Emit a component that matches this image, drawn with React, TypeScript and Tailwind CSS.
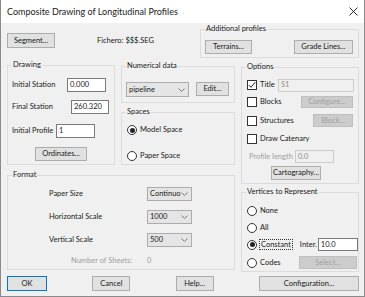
import type { ReactNode } from 'react';

const font = { fontFamily: 'Lato, "Liberation Sans", sans-serif' };

function Btn({ children, className = '', disabled = false, primary = false }: { children: ReactNode; className?: string; disabled?: boolean; primary?: boolean }) {
  return (
    <div
      className={`flex items-center justify-center shrink-0 border leading-none ${
        primary ? 'border-[#0078d7] bg-[#e1e1e1] text-[#1a1a1a]' : disabled ? 'border-[#bfbfbf] bg-[#cccccc] text-[#a0a0a0]' : 'border-[#adadad] bg-[#e1e1e1] text-[#1a1a1a]'
      } ${className}`}
    >
      {children}
    </div>
  );
}

function Group({ label, className = '', children }: { label: string; className?: string; children?: ReactNode }) {
  return (
    <div className={`relative border border-[#dcdcdc] ${className}`}>
      <span className="absolute left-[4px] top-[-6px] bg-[#f0f0f0] px-[1px] leading-[10px]">{label}</span>
      {children}
    </div>
  );
}

function TextBox({ value, className = '', dim = false }: { value: string; className?: string; dim?: boolean }) {
  return (
    <div
      className={`flex items-center shrink-0 border pl-[2px] leading-none ${
        dim ? 'border-[#cccccc] bg-[#f0f0f0] text-[#8a8a8a]' : 'border-[#7a7a7a] bg-white text-[#1a1a1a]'
      } ${className}`}
    >
      {value}
    </div>
  );
}

function Combo({ value, className = '' }: { value: string; className?: string }) {
  return (
    <div className={`flex items-center justify-between shrink-0 border border-[#acacac] bg-[#e5e5e5] pl-[2px] pr-[3px] leading-none ${className}`}>
      <span>{value}</span>
      <svg width="7" height="4" viewBox="0 0 7 4">
        <path d="M0.5 0.5 L3.5 3.5 L6.5 0.5" fill="none" stroke="#7a7a7a" strokeWidth="1" />
      </svg>
    </div>
  );
}

function Check({ checked = false }: { checked?: boolean }) {
  return (
    <div className="flex h-[10px] w-[10px] shrink-0 items-center justify-center border border-[#333] bg-white">
      {checked && (
        <svg width="8" height="8" viewBox="0 0 8 8">
          <path d="M0.8 4 L3 6.3 L7.2 1.2" fill="none" stroke="#222" strokeWidth="1" />
        </svg>
      )}
    </div>
  );
}

function Radio({ checked = false }: { checked?: boolean }) {
  return (
    <div className="flex h-[10px] w-[10px] shrink-0 items-center justify-center rounded-full border border-[#333] bg-white">
      {checked && <div className="h-[5px] w-[5px] rounded-full bg-[#222]" />}
    </div>
  );
}

export default function App() {
  return (
    <div className="h-[297px] w-[365px] overflow-hidden bg-[#f0f0f0] text-[7.5px] text-[#1a1a1a]" style={font}>
      <div className="flex h-[297px] flex-col border-x border-b border-[#8a8a8a]">
        {/* title bar */}
        <div className="flex h-[23px] shrink-0 items-center justify-between bg-white pl-[6px] pr-[6px]">
          <span className="text-[9px]">Composite Drawing of Longitudinal Profiles</span>
          <svg width="9" height="9" viewBox="0 0 9 9">
            <path d="M0.5 0.5 L8.5 8.5 M8.5 0.5 L0.5 8.5" stroke="#111" strokeWidth="0.9" />
          </svg>
        </div>

        <div className="flex flex-col pl-[6px] pr-[5px]">
          {/* row 1 */}
          <div className="flex h-[36px]">
            <Btn className="mt-[10px] h-[15px] w-[48px]">Segment...</Btn>
            <span className="ml-[42px] mt-[13px] leading-[10px]">Fichero: $$$.SEG</span>
            <Group label="Additional profiles" className="ml-auto mt-[6px] h-[29px] w-[159px]">
              <div className="mt-[10px] flex justify-between pl-[4px] pr-[5px]">
                <Btn className="h-[14px] w-[47px]">Terrains...</Btn>
                <Btn className="h-[14px] w-[59px]">Grade Lines...</Btn>
              </div>
            </Group>
          </div>

          {/* row 2 */}
          <div className="flex gap-[6px]">
            <div className="flex w-[228px] flex-col">
              <div className="mt-[6px] flex gap-[6px]">
                <Group label="Drawing" className="h-[100px] w-[108px]">
                  <div className="mt-[12px] flex h-[14px] items-center pl-[4px]">
                    <span className="w-[55px]">Initial Station</span>
                    <TextBox value="0.000" className="h-[14px] w-[39px]" />
                  </div>
                  <div className="mt-[8px] flex h-[14px] items-center pl-[4px]">
                    <span className="w-[59px]">Final Station</span>
                    <TextBox value="260.320" className="h-[14px] w-[38px]" />
                  </div>
                  <div className="mt-[10px] flex h-[14px] items-center pl-[4px]">
                    <span className="w-[44px]">Initial Profile</span>
                    <TextBox value="1" className="h-[14px] w-[39px]" />
                  </div>
                  <div className="mt-[9px] flex pl-[27px]">
                    <Btn className="h-[14px] w-[52px]">Ordinates...</Btn>
                  </div>
                </Group>
                <div className="flex w-[114px] flex-col">
                  <Group label="Numerical data" className="mt-[1px] h-[37px]">
                    <div className="mt-[15px] flex items-start gap-[7px] pl-[4px]">
                      <Combo value="pipeline" className="h-[15px] w-[63px]" />
                      <Btn className="h-[14px] w-[33px]">Edit...</Btn>
                    </div>
                  </Group>
                  <Group label="Spaces" className="mt-[9px] h-[53px]">
                    <div className="mt-[12px] flex h-[10px] items-center gap-[3px] pl-[5px]">
                      <Radio checked />
                      <span>Model Space</span>
                    </div>
                    <div className="mt-[16px] flex h-[10px] items-center gap-[3px] pl-[5px]">
                      <Radio />
                      <span>Paper Space</span>
                    </div>
                  </Group>
                </div>
              </div>

              <Group label="Format" className="mt-[10px] h-[95px]">
                <div className="mt-[11px] flex h-[14px] items-center pl-[41px]">
                  <span className="w-[98px]">Paper Size</span>
                  <Combo value="Continuo" className="h-[14px] w-[45px]" />
                </div>
                <div className="mt-[9px] flex h-[14px] items-center pl-[41px]">
                  <span className="w-[98px]">Horizontal Scale</span>
                  <Combo value="1000" className="h-[14px] w-[45px]" />
                </div>
                <div className="mt-[9px] flex h-[14px] items-center pl-[41px]">
                  <span className="w-[98px]">Vertical Scale</span>
                  <Combo value="500" className="h-[14px] w-[45px]" />
                </div>
                <div className="mt-[9px] flex h-[10px] items-center pl-[63px] text-[#a0a0a0]">
                  <span className="w-[76px]">Number of Sheets:</span>
                  <span>0</span>
                </div>
              </Group>
            </div>

            <div className="flex w-[118px] flex-col">
              <Group label="Options" className="mt-[8px] h-[117px]">
                <div className="mt-[10px] flex h-[14px] items-center pl-[5px]">
                  <Check checked />
                  <span className="ml-[3px] w-[18px]">Title</span>
                  <TextBox value="S1" dim className="h-[13px] w-[76px]" />
                </div>
                <div className="mt-[3px] flex h-[13px] items-center pl-[5px]">
                  <Check />
                  <span className="ml-[3px] w-[41px]">Blocks</span>
                  <Btn disabled className="h-[12px] w-[52px]">Configure...</Btn>
                </div>
                <div className="mt-[6px] flex h-[13px] items-center pl-[5px]">
                  <Check />
                  <span className="ml-[3px] w-[53px]">Structures</span>
                  <Btn disabled className="h-[13px] w-[40px]">Block...</Btn>
                </div>
                <div className="mt-[5px] flex h-[13px] items-center pl-[5px]">
                  <Check />
                  <span className="ml-[3px]">Draw Catenary</span>
                </div>
                <div className="mt-[5px] flex h-[13px] items-center pl-[7px]">
                  <span className="w-[46px] text-[#a0a0a0]">Profile length</span>
                  <TextBox value="0.0" dim className="h-[13px] w-[39px]" />
                </div>
                <div className="mt-[3px] flex pl-[29px]">
                  <Btn className="h-[14px] w-[50px]">Cartography...</Btn>
                </div>
              </Group>

              <Group label="Vertices to Represent" className="mt-[8px] h-[80px]">
                <div className="mt-[11px] flex h-[13px] items-center gap-[3px] pl-[5px]">
                  <Radio />
                  <span>None</span>
                </div>
                <div className="mt-[4px] flex h-[13px] items-center gap-[3px] pl-[5px]">
                  <Radio />
                  <span>All</span>
                </div>
                <div className="mt-[4px] flex h-[13px] items-center pl-[5px]">
                  <Radio checked />
                  <span className="ml-[2px] border border-dotted border-[#333] px-[1px] leading-[9px]">Constant</span>
                  <span className="ml-[7px] w-[18px]">Inter.</span>
                  <TextBox value="10.0" className="h-[13px] w-[40px]" />
                </div>
                <div className="mt-[5px] flex h-[13px] items-center pl-[5px]">
                  <Radio />
                  <span className="ml-[3px] w-[39px]">Codes</span>
                  <Btn disabled className="h-[13px] w-[58px]">Select...</Btn>
                </div>
              </Group>
            </div>
          </div>

          {/* bottom buttons */}
          <div className="mt-[4px] flex justify-between">
            <Btn primary className="h-[15px] w-[40px]">OK</Btn>
            <Btn className="h-[15px] w-[38px]">Cancel</Btn>
            <Btn className="h-[15px] w-[38px]">Help...</Btn>
            <Btn className="h-[15px] w-[100px]">Configuration...</Btn>
          </div>
        </div>
      </div>
    </div>
  );
}
